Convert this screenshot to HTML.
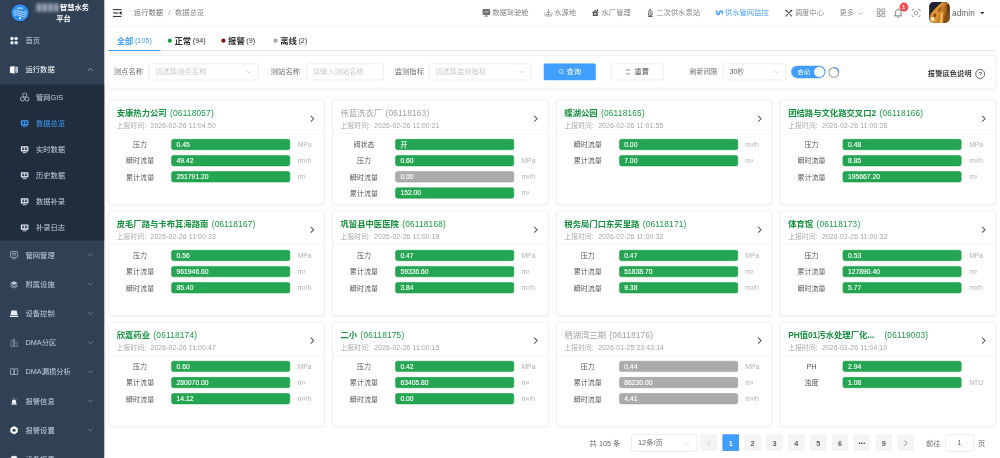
<!DOCTYPE html>
<html lang="zh-CN">
<head>
<meta charset="utf-8">
<title>数据总览</title>
<style>
*{box-sizing:border-box;margin:0;padding:0}
html,body{width:1000px;height:458px;overflow:hidden;background:#fff}
body{font-family:"Liberation Sans","Noto Sans CJK SC",sans-serif;color:#303133;font-weight:350}
#app{position:absolute;left:0;top:0;width:1920px;height:880px;transform:scale(0.5208333);transform-origin:0 0;background:#fff;overflow:hidden;font-size:14px}
.abs{position:absolute}
/* sidebar */
#side{position:absolute;left:0;top:0;width:200px;height:880px;background:#304156;box-shadow:1px 0 4px rgba(0,21,41,.35);z-index:5}
#side .logo{position:absolute;left:22px;top:8px;width:33px;height:33px;border-radius:50%;background:#2f8ff3;box-shadow:0 0 0 2px #2b3646}
#side .ttl{position:absolute;color:#fff;font-weight:bold;font-size:14px;line-height:20px;white-space:nowrap}
#side .blur{position:absolute;left:68px;top:6px;width:46px;height:17px;filter:blur(2.7px);opacity:.8;background:#667388}
#side .blur span{position:absolute;top:1px;width:6px;height:15px;background:#c3cad6}
#side .blur span:nth-child(1){left:4px}#side .blur span:nth-child(2){left:15px}#side .blur span:nth-child(3){left:26px}#side .blur span:nth-child(4){left:37px}
.mi{position:absolute;left:0;width:200px;height:56px;line-height:56px;color:#c6d1de;font-size:14px;font-weight:400}
.mi .tx{position:absolute;left:49px;top:0}
.mi svg.ic{position:absolute;left:18px;top:19px;width:18px;height:18px}
.mi svg.ch{position:absolute;left:168px;top:23px;width:11px;height:9px}
.sub{position:absolute;left:0;top:162px;width:200px;height:300px;background:#1f2d3d}
.si{position:absolute;left:0;width:200px;height:50px;line-height:50px;color:#c6d1de;font-size:14px;font-weight:400}
.si .tx{position:absolute;left:69px;top:0}
.si svg.ic{position:absolute;left:39px;top:16.5px;width:16.5px;height:16.5px}
.si.act{color:#409eff}
/* header */
#hdr{position:absolute;left:200px;top:0;width:1720px;height:50px;background:#fff;box-shadow:0 1px 4px rgba(0,21,41,.08)}
#hdr .bc{position:absolute;top:0;line-height:48px;font-size:14px;color:#606266;white-space:nowrap}
.nav{position:absolute;top:0;height:48px;line-height:48px;font-size:14px;color:#7d7d7d;white-space:nowrap}
.nav.act{color:#409eff}
.hic{position:absolute}
/* tabs */
.tab{position:absolute;top:59px;height:40px;line-height:40px;white-space:nowrap;font-size:16px;color:#303133}
.tab b{font-weight:bold;font-size:16px}
.tab i{font-style:normal;font-size:14px;margin-left:3px;position:relative;top:-1px}
.tab .dot{display:inline-block;width:8px;height:8px;border-radius:50%;margin-right:5px;position:relative;top:-2px}
.tab.act{color:#409eff}
#tabline{position:absolute;left:208px;top:96px;width:1704px;height:2px;background:#e4e7ed}
#tabact{position:absolute;left:208px;top:96px;width:100px;height:2px;background:#409eff}
/* filter */
#filter{position:absolute;left:208px;top:106px;width:1704px;height:64px;border:1px solid #e6ebf5;border-radius:4px;background:#fff;box-shadow:0 1px 6px rgba(0,0,0,.05)}
.flab{position:absolute;top:122px;height:32px;line-height:32px;font-size:14px;color:#606266;white-space:nowrap}
.finp{position:absolute;top:122px;height:32px;line-height:30px;border:1px solid #dcdfe6;border-radius:4px;font-size:14px;color:#c0c4cc;padding-left:12px;white-space:nowrap;background:#fff}
.finp svg{position:absolute;right:11px;top:11px;width:12px;height:8px}
.btn{position:absolute;top:122px;height:32px;line-height:30px;border-radius:3px;font-size:14px;text-align:center;white-space:nowrap}
/* cards */
.card{position:absolute;width:414.75px;height:201.6px;border:1px solid #e1e6f0;border-radius:4px;background:#fff;box-shadow:0 1px 5px rgba(0,0,0,.035)}
.chead{position:relative;height:64.5px;border-bottom:1px solid #ebeef5}
.ctitle{position:absolute;left:15px;top:13px;line-height:24px;font-size:16px;color:#1a9a46;white-space:nowrap}
.ctitle b{font-family:"Liberation Sans","Noto Sans CJK SC",sans-serif;font-weight:bold;color:#15903e;margin-right:2px}
.ctitle span{letter-spacing:.35px}
.ctime{position:absolute;left:15px;top:40px;line-height:18px;font-size:13px;color:#a3a3a3;white-space:nowrap;letter-spacing:.3px}
.carrow{position:absolute;left:385.5px;top:28.5px;width:9px;height:14px}
.card.off .ctitle,.card.off .ctitle b{color:#a0a0a0;font-weight:normal;font-family:"Liberation Sans","Noto Sans CJK SC",sans-serif}
.cbody{position:absolute;left:0;top:74.6px;width:100%}
.r{height:31.1px;position:relative}
.r .lab{position:absolute;left:0;top:0.5px;width:120px;text-align:center;line-height:21px;font-size:13.5px;color:#4a4a4a}
.r .bar{position:absolute;left:120px;top:0;width:228px;height:21px;line-height:19px;border-radius:4px;background:#23a551;border:1px solid #14993f;color:#fff;font-size:13px;padding-left:9px;-webkit-text-stroke:.25px #fff}
.r .bar.g{background:#ababab;border-color:#9b9b9b}
.r .unit{position:absolute;left:362.5px;top:0px;line-height:21px;font-size:13px;color:#b0b0b0}
.r .unit sup{font-size:8.5px;line-height:0;vertical-align:5px}
/* pagination */
.pg{position:absolute;top:835px;height:32px;line-height:32px;font-size:14px;color:#606266;white-space:nowrap;text-align:center}
.pb{position:absolute;top:834px;width:32px;height:32px;line-height:34.5px;border-radius:2px;background:#f4f4f5;color:#606266;font-size:14px;font-weight:bold;text-align:center}
.pb.act{background:#409eff;color:#fff}
</style>
</head>
<body>
<div id="app">

<!-- ============ SIDEBAR ============ -->
<div id="side">
  <div class="logo">
    <svg viewBox="0 0 33 33" width="33" height="33"><path d="M4 14 Q10 10 16.5 14 T29 14 M4 18 Q10 14 16.5 18 T29 18 M5 22 Q10 18 16.5 22 T28 22" fill="none" stroke="#cfe5ff" stroke-width="1.6"/><rect x="15" y="25" width="3" height="4" fill="#fff"/><rect x="10.5" y="6.5" width="12" height="3" rx="1" fill="#b9dcff" opacity=".75"/></svg>
  </div>
  <div class="blur"><span></span><span></span><span></span><span></span></div>
  <div class="ttl" style="left:115px;top:5px">智慧水务</div>
  <div class="ttl" style="left:108px;top:25px">平台</div>

  <div class="mi" style="top:50px">
    <svg class="ic" viewBox="0 0 18 18"><circle cx="5" cy="5" r="3.3" fill="#e6edf5"/><circle cx="13" cy="5" r="3.3" fill="#e6edf5"/><circle cx="5" cy="13" r="3.3" fill="#e6edf5"/><circle cx="13" cy="13" r="3.3" fill="#e6edf5"/></svg>
    <span class="tx">首页</span>
  </div>
  <div class="mi" style="top:106px">
    <svg class="ic" viewBox="0 0 18 18"><path d="M1 3.2 L10 1.5 V16.5 L1 14.8 Z" fill="#fff"/><path d="M11.6 3.2 H16.2 V14.8 H11.6 Z" fill="#dfe6ee"/><path d="M13.2 5.5 V8 M13.2 10 V12.5" stroke="#304156" stroke-width="1.2"/></svg>
    <span class="tx" style="color:#fff">运行数据</span>
    <svg class="ch" viewBox="0 0 11 9"><path d="M1 7 L5.5 2 L10 7" fill="none" stroke="#aeb9c6" stroke-width="1.4"/></svg>
  </div>
  <div class="sub">
    <div class="si" style="top:0">
      <svg class="ic" style="left:37.5px;top:15px;width:19px;height:19px" viewBox="0 0 18 18"><circle cx="9" cy="5" r="3.7" fill="none" stroke="#c6d1de" stroke-width="1.4"/><circle cx="4.8" cy="12.4" r="3.7" fill="none" stroke="#c6d1de" stroke-width="1.4"/><circle cx="13.2" cy="12.4" r="3.7" fill="none" stroke="#c6d1de" stroke-width="1.4"/></svg>
      <span class="tx">管网GIS</span></div>
    <div class="si act" style="top:50px">
      <svg class="ic" viewBox="0 0 18 18"><rect x="1" y="2" width="16" height="11" rx="1.5" fill="#409eff"/><rect x="5" y="14.5" width="8" height="2" fill="#409eff"/><rect x="3.6" y="4.6" width="4.6" height="5.4" fill="#1f2d3d"/><rect x="9.8" y="4.6" width="4.6" height="5.4" fill="#1f2d3d"/><path d="M3.6 7.2 H8.2 M9.8 7.2 H14.4" stroke="#409eff" stroke-width="1"/></svg>
      <span class="tx">数据总览</span></div>
    <div class="si" style="top:100px">
      <svg class="ic" viewBox="0 0 18 18"><rect x="1" y="2" width="16" height="11" rx="1.5" fill="#e3e9f0"/><rect x="5" y="14.5" width="8" height="2" fill="#e3e9f0"/><rect x="3.6" y="4.6" width="4.6" height="5.4" fill="#1f2d3d"/><rect x="9.8" y="4.6" width="4.6" height="5.4" fill="#1f2d3d"/><path d="M3.6 7.2 H8.2 M9.8 7.2 H14.4" stroke="#e3e9f0" stroke-width="1"/></svg>
      <span class="tx">实时数据</span></div>
    <div class="si" style="top:150px">
      <svg class="ic" viewBox="0 0 18 18"><rect x="1" y="2" width="16" height="11" rx="1.5" fill="#e3e9f0"/><rect x="5" y="14.5" width="8" height="2" fill="#e3e9f0"/><rect x="3.6" y="4.6" width="4.6" height="5.4" fill="#1f2d3d"/><rect x="9.8" y="4.6" width="4.6" height="5.4" fill="#1f2d3d"/><path d="M3.6 7.2 H8.2 M9.8 7.2 H14.4" stroke="#e3e9f0" stroke-width="1"/></svg>
      <span class="tx">历史数据</span></div>
    <div class="si" style="top:200px">
      <svg class="ic" viewBox="0 0 18 18"><rect x="1" y="2" width="16" height="11" rx="1.5" fill="#e3e9f0"/><rect x="5" y="14.5" width="8" height="2" fill="#e3e9f0"/><rect x="3.6" y="4.6" width="4.6" height="5.4" fill="#1f2d3d"/><rect x="9.8" y="4.6" width="4.6" height="5.4" fill="#1f2d3d"/><path d="M3.6 7.2 H8.2 M9.8 7.2 H14.4" stroke="#e3e9f0" stroke-width="1"/></svg>
      <span class="tx">数据补录</span></div>
    <div class="si" style="top:250px">
      <svg class="ic" viewBox="0 0 18 18"><rect x="1" y="2" width="16" height="11" rx="1.5" fill="#e3e9f0"/><rect x="5" y="14.5" width="8" height="2" fill="#e3e9f0"/><rect x="3.6" y="4.6" width="4.6" height="5.4" fill="#1f2d3d"/><rect x="9.8" y="4.6" width="4.6" height="5.4" fill="#1f2d3d"/><path d="M3.6 7.2 H8.2 M9.8 7.2 H14.4" stroke="#e3e9f0" stroke-width="1"/></svg>
      <span class="tx">补录日志</span></div>
  </div>
  <div class="mi" style="top:462px">
    <svg class="ic" viewBox="0 0 18 18"><rect x="2" y="2" width="14" height="11" rx="1.5" fill="none" stroke="#bfcbd9" stroke-width="1.4"/><path d="M5 5.5 H13 M5 8.5 H13 M6 16 H12" stroke="#bfcbd9" stroke-width="1.3"/></svg>
    <span class="tx">管网管理</span>
    <svg class="ch" viewBox="0 0 11 9"><path d="M1 2 L5.5 7 L10 2" fill="none" stroke="#8693a3" stroke-width="1.3"/></svg>
  </div>
  <div class="mi" style="top:518px">
    <svg class="ic" viewBox="0 0 18 18"><path d="M9 3 L16 6.5 L9 10 L2 6.5 Z" fill="#bfcbd9"/><path d="M2 9.5 L9 13 L16 9.5 M2 12.5 L9 16 L16 12.5" fill="none" stroke="#bfcbd9" stroke-width="1.4"/></svg>
    <span class="tx">附属设施</span>
    <svg class="ch" viewBox="0 0 11 9"><path d="M1 2 L5.5 7 L10 2" fill="none" stroke="#8693a3" stroke-width="1.3"/></svg>
  </div>
  <div class="mi" style="top:574px">
    <svg class="ic" viewBox="0 0 18 18"><path d="M4 3 H14 L16 12 H2 Z" fill="#e6edf5"/><rect x="1" y="13" width="16" height="2.6" fill="#e6edf5"/></svg>
    <span class="tx">设备控制</span>
    <svg class="ch" viewBox="0 0 11 9"><path d="M1 2 L5.5 7 L10 2" fill="none" stroke="#8693a3" stroke-width="1.3"/></svg>
  </div>
  <div class="mi" style="top:630px">
    <svg class="ic" viewBox="0 0 18 18"><path d="M3 16 V5 H8 V16 M8 16 V2 H10 V16 M10 9 H15 V16 M1 16 H17" fill="none" stroke="#8f9cac" stroke-width="1.2"/></svg>
    <span class="tx">DMA分区</span>
    <svg class="ch" viewBox="0 0 11 9"><path d="M1 2 L5.5 7 L10 2" fill="none" stroke="#8693a3" stroke-width="1.3"/></svg>
  </div>
  <div class="mi" style="top:686px">
    <svg class="ic" viewBox="0 0 18 18"><path d="M2 3 H7.5 Q9 3 9 4.5 V15 Q9 14 7.5 14 H2 Z M16 3 H10.5 Q9 3 9 4.5 V15 Q9 14 10.5 14 H16 Z" fill="none" stroke="#bfcbd9" stroke-width="1.3"/></svg>
    <span class="tx">DMA漏损分析</span>
    <svg class="ch" viewBox="0 0 11 9"><path d="M1 2 L5.5 7 L10 2" fill="none" stroke="#8693a3" stroke-width="1.3"/></svg>
  </div>
  <div class="mi" style="top:742px">
    <svg class="ic" viewBox="0 0 18 18"><path d="M5 14 V10 Q5 6 9 6 Q13 6 13 10 V14 Z" fill="#e6edf5"/><rect x="4" y="14" width="10" height="2" fill="#e6edf5"/><path d="M9 2 V4 M3.5 4.5 L5 6 M14.5 4.5 L13 6" stroke="#e6edf5" stroke-width="1.2"/></svg>
    <span class="tx">报警信息</span>
    <svg class="ch" viewBox="0 0 11 9"><path d="M1 2 L5.5 7 L10 2" fill="none" stroke="#8693a3" stroke-width="1.3"/></svg>
  </div>
  <div class="mi" style="top:798px">
    <svg class="ic" viewBox="0 0 18 18"><path d="M9 1.6 L15.4 5.3 V12.7 L9 16.4 L2.6 12.7 V5.3 Z" fill="#fff" stroke="#fff" stroke-width="1.2" stroke-linejoin="round"/><circle cx="9" cy="9" r="3" fill="#304156"/></svg>
    <span class="tx">报警设置</span>
    <svg class="ch" viewBox="0 0 11 9"><path d="M1 2 L5.5 7 L10 2" fill="none" stroke="#8693a3" stroke-width="1.3"/></svg>
  </div>
  <div class="mi" style="top:854px">
    <svg class="ic" viewBox="0 0 18 18"><circle cx="9" cy="9" r="7" fill="#e6edf5"/></svg>
    <span class="tx">设备报表</span>
    <svg class="ch" viewBox="0 0 11 9"><path d="M1 2 L5.5 7 L10 2" fill="none" stroke="#8693a3" stroke-width="1.3"/></svg>
  </div>
</div>

<!-- ============ HEADER ============ -->
<div id="hdr">
  <svg class="hic" style="left:17px;top:17px" width="17" height="16" viewBox="0 0 17 16"><path d="M0 1.5 H16.5 M0 8 H10.5 M0 14.5 H16.5" stroke="#222" stroke-width="1.9" fill="none"/><path d="M16.5 4.2 L11.3 8 L16.5 11.8 Z" fill="#222"/></svg>
  <span class="bc" style="left:57px">运行数据</span>
  <span class="bc" style="left:123px;color:#909399">/</span>
  <span class="bc" style="left:136px;color:#7a7d84">数据总览</span>

  <!-- nav : left offsets are (target_px*1.92 - 200) -->
  <svg class="hic" style="left:726px;top:16.5px" width="15.5" height="15.5" viewBox="0 0 15.5 15.5"><rect x="0.3" y="0.3" width="15" height="11.4" rx="1.8" fill="#6e6e6e"/><path d="M3.2 7.8 L6.2 4.6 L8.8 7 L12.3 3.8" stroke="#fff" stroke-width="1.3" fill="none"/><rect x="4" y="13.3" width="7.5" height="1.8" fill="#6e6e6e"/><rect x="6.8" y="11" width="2" height="3" fill="#6e6e6e"/></svg>
  <span class="nav" style="left:745px">数据驾驶舱</span>

  <svg class="hic" style="left:845px;top:16.5px" width="16" height="15" viewBox="0 0 16 15"><path d="M1 6.5 V11 Q1 14 4 14 H12 Q15 14 15 11 V6.5" fill="none" stroke="#777" stroke-width="1.4"/><path d="M8 0.5 V8.5 M5 6 L8 9 L11 6" fill="none" stroke="#777" stroke-width="1.5"/><path d="M3.5 11 H12.5" stroke="#777" stroke-width="1.4"/></svg>
  <span class="nav" style="left:864px">水源地</span>

  <svg class="hic" style="left:936px;top:17px" width="14" height="14" viewBox="0 0 14 14"><path d="M0.3 6.8 L7 1.5 L13.7 6.8 L12.6 8 L7 3.6 L1.4 8 Z" fill="#555"/><path d="M2.2 8 L7 4.3 L11.8 8 V13.5 H2.2 Z" fill="#555"/><rect x="5" y="8.4" width="4" height="2.6" fill="#fff"/><rect x="10" y="0.5" width="2.2" height="4" fill="#555"/></svg>
  <span class="nav" style="left:955px">水厂管理</span>

  <svg class="hic" style="left:1043px;top:16.5px" width="11" height="16" viewBox="0 0 11 16"><path d="M3.5 0.8 H6 V3" fill="none" stroke="#444" stroke-width="1.5"/><path d="M2 7 Q2 3.2 5.5 3.2 Q9 3.2 9 7 V12 H2 Z" fill="none" stroke="#444" stroke-width="1.5"/><circle cx="5.5" cy="8" r="1.5" fill="#444"/><path d="M0.8 14.6 H10.2 M5.5 12 V14.5" stroke="#444" stroke-width="1.6"/></svg>
  <span class="nav" style="left:1060px">二次供水泵站</span>

  <svg class="hic" style="left:1174px;top:18.5px" width="15" height="11" viewBox="0 0 15 11"><path d="M1.8 1.8 Q2 9 4.8 9 Q7.5 9 7.5 5.5 Q7.5 2 10.2 2 Q13.2 2 13.2 7" fill="none" stroke="#409eff" stroke-width="3.1" stroke-linecap="round"/></svg>
  <span class="nav act" style="left:1192px">供水管网监控</span>

  <svg class="hic" style="left:1307px;top:17.5px" width="15" height="14" viewBox="0 0 15 14"><path d="M2.5 2 L13 13 M12.5 2 L2 13" stroke="#555" stroke-width="2" stroke-linecap="round"/><circle cx="2.6" cy="2.2" r="2.1" fill="#555"/><circle cx="12.4" cy="2.2" r="2.1" fill="#555"/></svg>
  <span class="nav" style="left:1326px">调度中心</span>

  <span class="nav" style="left:1412px;color:#8a8a8a">更多</span>
  <svg class="hic" style="left:1447px;top:22px" width="11" height="8" viewBox="0 0 11 8"><path d="M1 1.5 L5.5 6 L10 1.5" fill="none" stroke="#999" stroke-width="1.3"/></svg>

  <svg class="hic" style="left:1483px;top:16px" width="17" height="17" viewBox="0 0 17 17"><rect x="0.8" y="0.8" width="6" height="6" rx="0.6" fill="none" stroke="#666" stroke-width="1.4"/><rect x="10.2" y="0.8" width="6" height="6" rx="0.6" fill="none" stroke="#666" stroke-width="1.4"/><rect x="0.8" y="10.2" width="6" height="6" rx="0.6" fill="none" stroke="#666" stroke-width="1.4"/><rect x="10.2" y="10.2" width="6" height="6" rx="0.6" fill="none" stroke="#666" stroke-width="1.4"/></svg>

  <svg class="hic" style="left:1516px;top:15px" width="17" height="20" viewBox="0 0 17 20"><path d="M3 14 V9 Q3 3.5 8.5 3.5 Q14 3.5 14 9 V14 L15.5 15.5 H1.5 Z" fill="none" stroke="#555" stroke-width="1.4" stroke-linejoin="round"/><path d="M6.5 17.5 Q8.5 19.5 10.5 17.5" fill="none" stroke="#555" stroke-width="1.4"/><path d="M8.5 1.5 V3.5" stroke="#555" stroke-width="1.4"/></svg>
  <div class="abs" style="left:1526.5px;top:4.5px;width:17px;height:17px;border-radius:50%;background:#f24c4c;color:#fff;font-size:11px;font-weight:bold;line-height:17px;text-align:center">1</div>

  <svg class="hic" style="left:1550px;top:16.5px" width="17.5" height="16.5" viewBox="0 0 19 18"><path d="M1 5.5 V3 Q1 1 3 1 H5.5 M13.5 1 H16 Q18 1 18 3 V5.5 M18 12.5 V15 Q18 17 16 17 H13.5 M5.5 17 H3 Q1 17 1 15 V12.5" fill="none" stroke="#777" stroke-width="1.4"/><circle cx="9.5" cy="9" r="3.6" fill="none" stroke="#777" stroke-width="1.4"/></svg>

  <div class="abs" style="left:1583.5px;top:4px;width:39.5px;height:39.5px;border-radius:9px;overflow:hidden;background:#1a2033">
    <svg width="40" height="40" viewBox="0 0 40 40"><defs><filter id="avb" x="-20%" y="-20%" width="140%" height="140%"><feGaussianBlur stdDeviation="1.1"/></filter><linearGradient id="avg" x1="0" y1="0" x2="1" y2="0.3"><stop offset="0" stop-color="#c97a22"/><stop offset=".5" stop-color="#e29a3c"/><stop offset=".8" stop-color="#b06a1e"/><stop offset="1" stop-color="#6e3d12"/></linearGradient></defs>
    <rect width="40" height="40" fill="url(#avg)"/>
    <g filter="url(#avb)">
      <path d="M-4 -4 H29 L12 12 L3 22 L1 30 L-4 34 Z" fill="#1b2234"/>
      <path d="M33 6 L42 2 V22 L36 20 Z" fill="#5c3410"/>
      <path d="M17 13 L24 9 L22 17 L16 20 Z" fill="#a86218"/>
      <path d="M8 24 L14 22 L13 28 L9 29 Z" fill="#7a4414"/>
      <path d="M3 30 L8 28 L10 35 L5 37 Z" fill="#fff1c8"/>
      <path d="M22 22 L27 18 L26 40 L20 40 Z" fill="#f0b45a"/>
      <path d="M-2 36 L6 40 L-2 42 Z" fill="#8a5a1c"/>
      <path d="M30 26 L42 22 V42 H30 Z" fill="#8a4f16"/>
    </g></svg>
  </div>
  <span class="nav" style="left:1628px;color:#666;font-size:16px;line-height:50px">admin</span>
  <svg class="hic" style="left:1682px;top:23px" width="8" height="5" viewBox="0 0 8 5"><path d="M0 0 H8 L4 5 Z" fill="#333"/></svg>
</div>

<!-- ============ TABS ============ -->
<div id="tabline"></div>
<div id="tabact"></div>
<div class="tab act" style="left:224px"><b>全部</b><i>(105)</i></div>
<div class="tab" style="left:322px"><span class="dot" style="background:#13a03a"></span><b>正常</b><i>(94)</i></div>
<div class="tab" style="left:425px"><span class="dot" style="background:#8b0d0d"></span><b>报警</b><i>(9)</i></div>
<div class="tab" style="left:525px"><span class="dot" style="background:#a9a9a9"></span><b>离线</b><i>(2)</i></div>

<!-- ============ FILTER ============ -->
<div id="filter"></div>
<span class="flab" style="left:218.5px">测点名称</span>
<div class="finp" style="left:285px;width:211px">请选择测点名称<svg viewBox="0 0 12 8"><path d="M1 1.5 L6 6.5 L11 1.5" fill="none" stroke="#c0c4cc" stroke-width="1.3"/></svg></div>
<span class="flab" style="left:520px">测站名称</span>
<div class="finp" style="left:587.5px;width:149px">请输入测站名称</div>
<span class="flab" style="left:758px">监测指标</span>
<div class="finp" style="left:822.5px;width:197px">请选择监测指标<svg viewBox="0 0 12 8"><path d="M1 1.5 L6 6.5 L11 1.5" fill="none" stroke="#c0c4cc" stroke-width="1.3"/></svg></div>
<div class="btn" style="left:1043.5px;width:100px;background:#409eff;border:1px solid #409eff;color:#fff"><svg width="12" height="12" viewBox="0 0 12 12" style="vertical-align:-1px;margin-right:4px"><circle cx="5" cy="5" r="3.8" fill="none" stroke="#fff" stroke-width="1.2"/><path d="M8 8 L11 11" stroke="#fff" stroke-width="1.2"/></svg>查询</div>
<div class="btn" style="left:1172.5px;width:101px;background:#fff;border:1px solid #dcdfe6;color:#444"><svg width="12" height="12" viewBox="0 0 12 12" style="vertical-align:-1px;margin-right:6px"><path d="M10 4 A4.3 4.3 0 0 0 2 4.5 M2 8 A4.3 4.3 0 0 0 10 7.5" fill="none" stroke="#555" stroke-width="1.2"/></svg>重置</div>
<span class="flab" style="left:1324.5px;font-size:13px">刷新间隔</span>
<div class="finp" style="left:1388px;width:121px;color:#606266;font-size:13px">30秒<svg viewBox="0 0 12 8"><path d="M1 1.5 L6 6.5 L11 1.5" fill="none" stroke="#c0c4cc" stroke-width="1.3"/></svg></div>
<div class="abs" style="left:1519px;top:126px;width:66px;height:24px;border-radius:12px;background:#409eff;color:#fff;font-size:12px;line-height:24px;padding-left:12px">启动<div class="abs" style="right:2px;top:2px;width:20px;height:20px;border-radius:50%;background:#fff"></div></div>
<svg class="abs" style="left:1590px;top:127.5px" width="22" height="22" viewBox="0 0 22 22"><circle cx="11" cy="11" r="9.3" fill="none" stroke="#a2a2a2" stroke-width="2.3"/><path d="M11 1.7 A9.3 9.3 0 0 1 20.3 11" fill="none" stroke="#409eff" stroke-width="2.3"/></svg>
<span class="flab" style="left:1781.5px;top:125px;color:#222;font-size:14px;font-weight:500">报警底色说明</span>
<svg class="abs" style="left:1871.5px;top:131.5px" width="20" height="20" viewBox="0 0 20 20"><circle cx="10" cy="10" r="8.6" fill="none" stroke="#333" stroke-width="1.4"/><text x="10" y="14.3" font-size="12" text-anchor="middle" fill="#222" font-family="Liberation Sans, sans-serif">?</text></svg>

<!-- ============ CARDS ============ -->
<div class="card" style="left:208.00px;top:191.30px"><div class="chead"><div class="ctitle"><b>安康热力公司</b> <span>(06118057)</span></div><div class="ctime">上报时间:&nbsp; 2026-02-26 11:04:50</div><svg class="carrow" viewBox="0 0 12 20"><path d="M2 2 L10 10 L2 18" fill="none" stroke="#555" stroke-width="2.8"/></svg></div><div class="cbody"><div class="r"><span class="lab">压力</span><span class="bar">0.45</span><span class="unit">MPa</span></div><div class="r"><span class="lab">瞬时流量</span><span class="bar">49.42</span><span class="unit">m³/h</span></div><div class="r"><span class="lab">累计流量</span><span class="bar">251791.20</span><span class="unit">m³</span></div></div></div>
<div class="card off" style="left:637.75px;top:191.30px"><div class="chead"><div class="ctitle"><b>伟蓝洗衣厂</b> <span>(06118163)</span></div><div class="ctime">上报时间:&nbsp; 2026-02-26 11:00:21</div><svg class="carrow" viewBox="0 0 12 20"><path d="M2 2 L10 10 L2 18" fill="none" stroke="#555" stroke-width="2.8"/></svg></div><div class="cbody"><div class="r"><span class="lab">阀状态</span><span class="bar">开</span><span class="unit"></span></div><div class="r"><span class="lab">压力</span><span class="bar">0.60</span><span class="unit">MPa</span></div><div class="r"><span class="lab">瞬时流量</span><span class="bar g">0.00</span><span class="unit">m³/h</span></div><div class="r"><span class="lab">累计流量</span><span class="bar">152.00</span><span class="unit">m³</span></div></div></div>
<div class="card" style="left:1067.50px;top:191.30px"><div class="chead"><div class="ctitle"><b>蝶湖公园</b> <span>(06118165)</span></div><div class="ctime">上报时间:&nbsp; 2026-02-26 11:01:55</div><svg class="carrow" viewBox="0 0 12 20"><path d="M2 2 L10 10 L2 18" fill="none" stroke="#555" stroke-width="2.8"/></svg></div><div class="cbody"><div class="r"><span class="lab">瞬时流量</span><span class="bar">0.00</span><span class="unit">m³/h</span></div><div class="r"><span class="lab">累计流量</span><span class="bar">7.00</span><span class="unit">m³</span></div></div></div>
<div class="card" style="left:1497.25px;top:191.30px"><div class="chead"><div class="ctitle"><b>团结路与文化路交叉口2</b> <span>(06118166)</span></div><div class="ctime">上报时间:&nbsp; 2026-02-26 11:00:28</div><svg class="carrow" viewBox="0 0 12 20"><path d="M2 2 L10 10 L2 18" fill="none" stroke="#555" stroke-width="2.8"/></svg></div><div class="cbody"><div class="r"><span class="lab">压力</span><span class="bar">0.48</span><span class="unit">MPa</span></div><div class="r"><span class="lab">瞬时流量</span><span class="bar">8.85</span><span class="unit">m³/h</span></div><div class="r"><span class="lab">累计流量</span><span class="bar">195667.20</span><span class="unit">m³</span></div></div></div>
<div class="card" style="left:208.00px;top:404.50px"><div class="chead"><div class="ctitle"><b>皮毛厂路与卡布其海路南</b> <span>(06118167)</span></div><div class="ctime">上报时间:&nbsp; 2026-02-26 11:00:33</div><svg class="carrow" viewBox="0 0 12 20"><path d="M2 2 L10 10 L2 18" fill="none" stroke="#555" stroke-width="2.8"/></svg></div><div class="cbody"><div class="r"><span class="lab">压力</span><span class="bar">0.56</span><span class="unit">MPa</span></div><div class="r"><span class="lab">累计流量</span><span class="bar">961946.60</span><span class="unit">m³</span></div><div class="r"><span class="lab">瞬时流量</span><span class="bar">85.40</span><span class="unit">m³/h</span></div></div></div>
<div class="card" style="left:637.75px;top:404.50px"><div class="chead"><div class="ctitle"><b>巩留县中医医院</b> <span>(06118168)</span></div><div class="ctime">上报时间:&nbsp; 2026-02-26 11:00:18</div><svg class="carrow" viewBox="0 0 12 20"><path d="M2 2 L10 10 L2 18" fill="none" stroke="#555" stroke-width="2.8"/></svg></div><div class="cbody"><div class="r"><span class="lab">压力</span><span class="bar">0.47</span><span class="unit">MPa</span></div><div class="r"><span class="lab">累计流量</span><span class="bar">59336.60</span><span class="unit">m³</span></div><div class="r"><span class="lab">瞬时流量</span><span class="bar">3.84</span><span class="unit">m³/h</span></div></div></div>
<div class="card" style="left:1067.50px;top:404.50px"><div class="chead"><div class="ctitle"><b>税务局门口东买里路</b> <span>(06118171)</span></div><div class="ctime">上报时间:&nbsp; 2026-02-26 11:00:32</div><svg class="carrow" viewBox="0 0 12 20"><path d="M2 2 L10 10 L2 18" fill="none" stroke="#555" stroke-width="2.8"/></svg></div><div class="cbody"><div class="r"><span class="lab">压力</span><span class="bar">0.47</span><span class="unit">MPa</span></div><div class="r"><span class="lab">累计流量</span><span class="bar">51838.70</span><span class="unit">m³</span></div><div class="r"><span class="lab">瞬时流量</span><span class="bar">9.38</span><span class="unit">m³/h</span></div></div></div>
<div class="card" style="left:1497.25px;top:404.50px"><div class="chead"><div class="ctitle"><b>体育馆</b> <span>(06118173)</span></div><div class="ctime">上报时间:&nbsp; 2026-02-26 11:00:32</div><svg class="carrow" viewBox="0 0 12 20"><path d="M2 2 L10 10 L2 18" fill="none" stroke="#555" stroke-width="2.8"/></svg></div><div class="cbody"><div class="r"><span class="lab">压力</span><span class="bar">0.53</span><span class="unit">MPa</span></div><div class="r"><span class="lab">累计流量</span><span class="bar">127890.40</span><span class="unit">m³</span></div><div class="r"><span class="lab">瞬时流量</span><span class="bar">5.77</span><span class="unit">m³/h</span></div></div></div>
<div class="card" style="left:208.00px;top:617.70px"><div class="chead"><div class="ctitle"><b>欣嘉药业</b> <span>(06118174)</span></div><div class="ctime">上报时间:&nbsp; 2026-02-26 11:00:47</div><svg class="carrow" viewBox="0 0 12 20"><path d="M2 2 L10 10 L2 18" fill="none" stroke="#555" stroke-width="2.8"/></svg></div><div class="cbody"><div class="r"><span class="lab">压力</span><span class="bar">0.60</span><span class="unit">MPa</span></div><div class="r"><span class="lab">累计流量</span><span class="bar">280070.00</span><span class="unit">m³</span></div><div class="r"><span class="lab">瞬时流量</span><span class="bar">14.12</span><span class="unit">m³/h</span></div></div></div>
<div class="card" style="left:637.75px;top:617.70px"><div class="chead"><div class="ctitle"><b>二小</b> <span>(06118175)</span></div><div class="ctime">上报时间:&nbsp; 2026-02-26 11:00:15</div><svg class="carrow" viewBox="0 0 12 20"><path d="M2 2 L10 10 L2 18" fill="none" stroke="#555" stroke-width="2.8"/></svg></div><div class="cbody"><div class="r"><span class="lab">压力</span><span class="bar">0.42</span><span class="unit">MPa</span></div><div class="r"><span class="lab">累计流量</span><span class="bar">63405.80</span><span class="unit">m³</span></div><div class="r"><span class="lab">瞬时流量</span><span class="bar">0.00</span><span class="unit">m³/h</span></div></div></div>
<div class="card off" style="left:1067.50px;top:617.70px"><div class="chead"><div class="ctitle"><b>栖湖湾三期</b> <span>(06118176)</span></div><div class="ctime">上报时间:&nbsp; 2026-01-25 23:43:14</div><svg class="carrow" viewBox="0 0 12 20"><path d="M2 2 L10 10 L2 18" fill="none" stroke="#555" stroke-width="2.8"/></svg></div><div class="cbody"><div class="r"><span class="lab">压力</span><span class="bar g">0.44</span><span class="unit">MPa</span></div><div class="r"><span class="lab">累计流量</span><span class="bar g">86230.00</span><span class="unit">m³</span></div><div class="r"><span class="lab">瞬时流量</span><span class="bar g">4.41</span><span class="unit">m³/h</span></div></div></div>
<div class="card" style="left:1497.25px;top:617.70px"><div class="chead"><div class="ctitle"><b>PH值01污水处理厂化...</b> <span style="margin-left:13px">(06119003)</span></div><div class="ctime">上报时间:&nbsp; 2026-02-26 11:04:10</div><svg class="carrow" viewBox="0 0 12 20"><path d="M2 2 L10 10 L2 18" fill="none" stroke="#555" stroke-width="2.8"/></svg></div><div class="cbody"><div class="r"><span class="lab">PH</span><span class="bar">2.94</span><span class="unit"></span></div><div class="r"><span class="lab">浊度</span><span class="bar">1.08</span><span class="unit">NTU</span></div></div></div>

<!-- ============ PAGINATION ============ -->
<span class="pg" style="left:1132px">共 105 条</span>
<div class="abs" style="left:1212px;top:834px;width:127px;height:32.5px;border:1px solid #dcdfe6;border-radius:4px;line-height:30px;font-size:14px;color:#606266;padding-left:12px">12条/页<svg class="abs" style="right:13px;top:12px" width="12" height="8" viewBox="0 0 12 8"><path d="M1 1.5 L6 6.5 L11 1.5" fill="none" stroke="#c0c4cc" stroke-width="1.3"/></svg></div>
<div class="pb" style="left:1345px"><svg width="8" height="12" viewBox="0 0 8 12" style="vertical-align:-1px"><path d="M6.5 1 L1.5 6 L6.5 11" fill="none" stroke="#c0c4cc" stroke-width="1.4"/></svg></div>
<div class="pb act" style="left:1387px">1</div>
<div class="pb" style="left:1429px">2</div>
<div class="pb" style="left:1471px">3</div>
<div class="pb" style="left:1513px">4</div>
<div class="pb" style="left:1555px">5</div>
<div class="pb" style="left:1597px">6</div>
<div class="pb" style="left:1639px;font-size:10px;letter-spacing:1px;color:#333">•••</div>
<div class="pb" style="left:1681px">9</div>
<div class="pb" style="left:1723px"><svg width="8" height="12" viewBox="0 0 8 12" style="vertical-align:-1px"><path d="M1.5 1 L6.5 6 L1.5 11" fill="none" stroke="#555" stroke-width="1.4"/></svg></div>
<span class="pg" style="left:1778px">前往</span>
<div class="abs" style="left:1814.5px;top:834px;width:55px;height:32.5px;border:1px solid #dcdfe6;border-radius:4px;line-height:30px;font-size:14px;color:#606266;text-align:center">1</div>
<span class="pg" style="left:1878px">页</span>

</div>
</body>
</html>
